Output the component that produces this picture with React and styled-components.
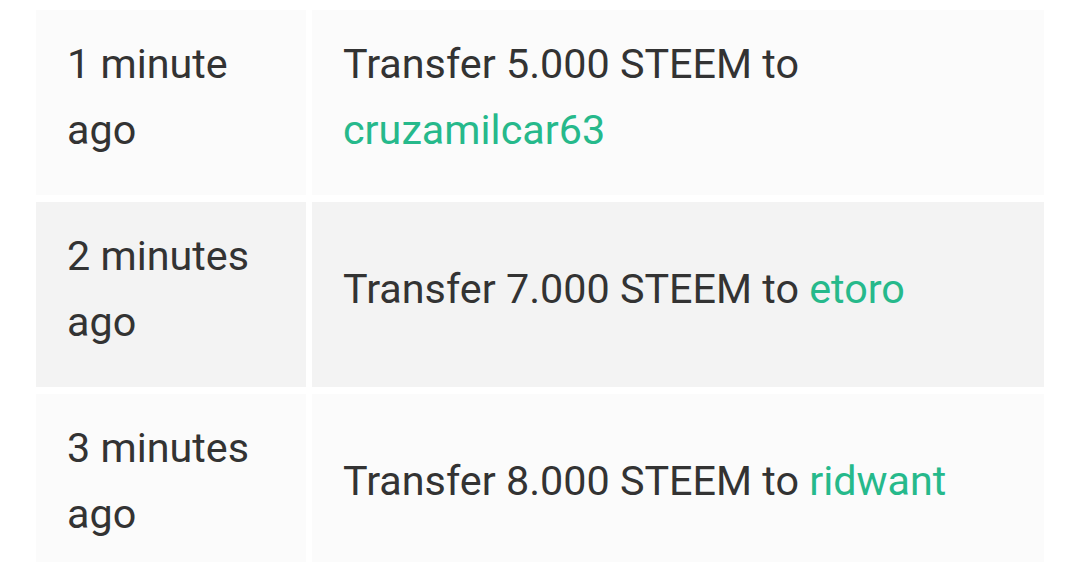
import React from "react";
import styled, { createGlobalStyle } from "styled-components";

const Global = createGlobalStyle`
  html, body { margin: 0; padding: 0; background: #ffffff; }
  body { font-family: Roboto, "Noto Sans", sans-serif; overflow: hidden; }
`;

const Page = styled.div`
  padding: 10px 0 0 36px;
  height: 562px;
  box-sizing: border-box;
`;

const Table = styled.div`
  display: grid;
  grid-template-columns: 270px 732px;
  column-gap: 6px;
  row-gap: 7px;
`;

const Cell = styled.div`
  display: flex;
  align-items: center;
  box-sizing: border-box;
  min-height: 185px;
  padding: 21px 31px 32px;
  background: ${(p) => (p.$shade ? "#f3f3f3" : "#fbfbfb")};
  color: #333333;
  font-size: 41.3px;
  line-height: 66px;
`;

const TimeText = styled.span`
  display: block;
`;

const Link = styled.a`
  color: #26b98b;
  text-decoration: none;
`;

const rows = [
  { time: "1 minute ago", amount: "5.000", to: "cruzamilcar63" },
  { time: "2 minutes ago", amount: "7.000", to: "etoro" },
  { time: "3 minutes ago", amount: "8.000", to: "ridwant" },
];

export default function App() {
  return (
    <>
      <Global />
      <Page>
        <Table>
          {rows.map((r, i) => (
            <React.Fragment key={i}>
              <Cell $shade={i % 2 === 1}>
                <TimeText>{r.time}</TimeText>
              </Cell>
              <Cell $shade={i % 2 === 1}>
                <span>
                  Transfer {r.amount} STEEM to <Link href="#">{r.to}</Link>
                </span>
              </Cell>
            </React.Fragment>
          ))}
        </Table>
      </Page>
    </>
  );
}
